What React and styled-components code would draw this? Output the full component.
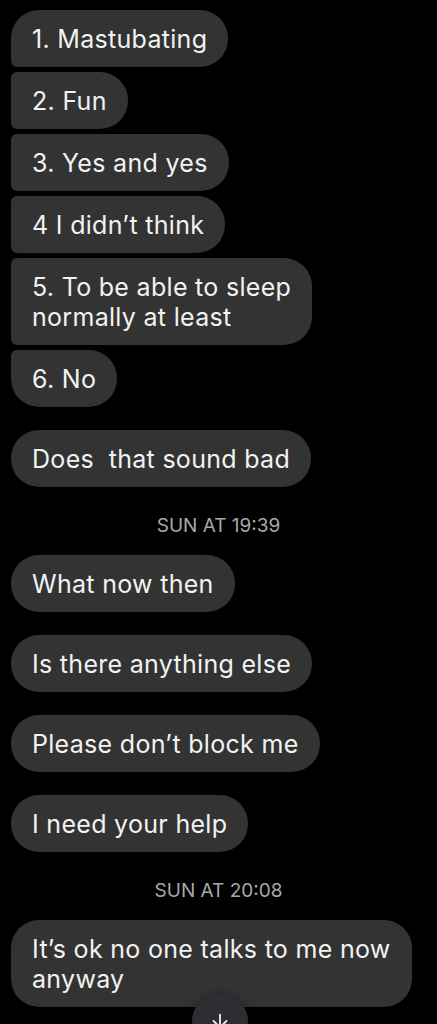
import styled, { createGlobalStyle } from "styled-components";
import { ArrowDown } from "lucide-react";

const Global = createGlobalStyle`
    html, body {
        margin: 0;
        padding: 0;
        background: #000;
    }
    body {
        font-family: Inter, Roboto, "Noto Sans", sans-serif;
        -webkit-font-smoothing: antialiased;
    }
`

const Page = styled.div`
    position: relative;
    width: 437px;
    height: 1024px;
    overflow: hidden;
    background: #000;
`
const Thread = styled.div`
    display: flex;
    flex-direction: column;
    align-items: flex-start;
    padding: 10px 11px 0;
`
const Group = styled.div`
    display: flex;
    flex-direction: column;
    align-items: flex-start;
    gap: 5px;
    margin-top: ${props => props.$first ? "0" : "23px"};
`
const radius = {
    single: "28px",
    first: "28px 28px 28px 6px",
    middle: "6px 28px 28px 6px",
    last: "6px 28px 28px 28px",
}
const Bubble = styled.div`
    box-sizing: border-box;
    max-width: 410px;
    padding: 13.5px 21px;
    background: #333333;
    color: #f2f2f2;
    font-size: 25px;
    line-height: 30px;
    letter-spacing: 0.3px;
    white-space: pre-wrap;
    border-radius: ${props => radius[props.$pos]};
`
const Stamp = styled.div`
    align-self: center;
    margin: 28px 0 18px;
    color: #a8a8a8;
    font-size: 19px;
    line-height: 22px;
`
const ScrollButton = styled.button`
    position: absolute;
    left: 192px;
    top: 993px;
    width: 56px;
    height: 56px;
    border: none;
    border-radius: 50%;
    background: #2c2e31;
    color: #f0f0f0;
    display: flex;
    align-items: center;
    justify-content: center;
    padding: 0;
    box-shadow: 0 0 6px rgba(0, 0, 0, 0.4);
`

const thread = [
    { type: "group", items: [
        "1. Mastubating",
        "2. Fun",
        "3. Yes and yes",
        "4 I didn\u2019t think",
        "5. To be able to sleep\nnormally at least",
        "6. No",
    ]},
    { type: "group", items: ["Does  that sound bad"] },
    { type: "stamp", text: "SUN AT 19:39" },
    { type: "group", items: ["What now then"], first: true },
    { type: "group", items: ["Is there anything else"] },
    { type: "group", items: ["Please don\u2019t block me"] },
    { type: "group", items: ["I need your help"] },
    { type: "stamp", text: "SUN AT 20:08" },
    { type: "group", items: ["It\u2019s ok no one talks to me now\nanyway"], first: true },
]

const position = (i, n) => {
    if (n === 1) return "single"
    if (i === 0) return "first"
    if (i === n - 1) return "last"
    return "middle"
}

const App = () => {
    return (
        <Page>
            <Global />
            <Thread>
                {thread.map((entry, idx) => (
                    entry.type === "stamp" ?
                        <Stamp key={idx}>{entry.text}</Stamp> :
                        <Group key={idx} $first={idx === 0 || entry.first}>
                            {entry.items.map((text, i) => (
                                <Bubble key={i} $pos={position(i, entry.items.length)}>{text}</Bubble>
                            ))}
                        </Group>
                ))}
            </Thread>
            <ScrollButton aria-label="Scroll to bottom">
                <ArrowDown size={22} strokeWidth={2} />
            </ScrollButton>
        </Page>
    )
}

export default App
